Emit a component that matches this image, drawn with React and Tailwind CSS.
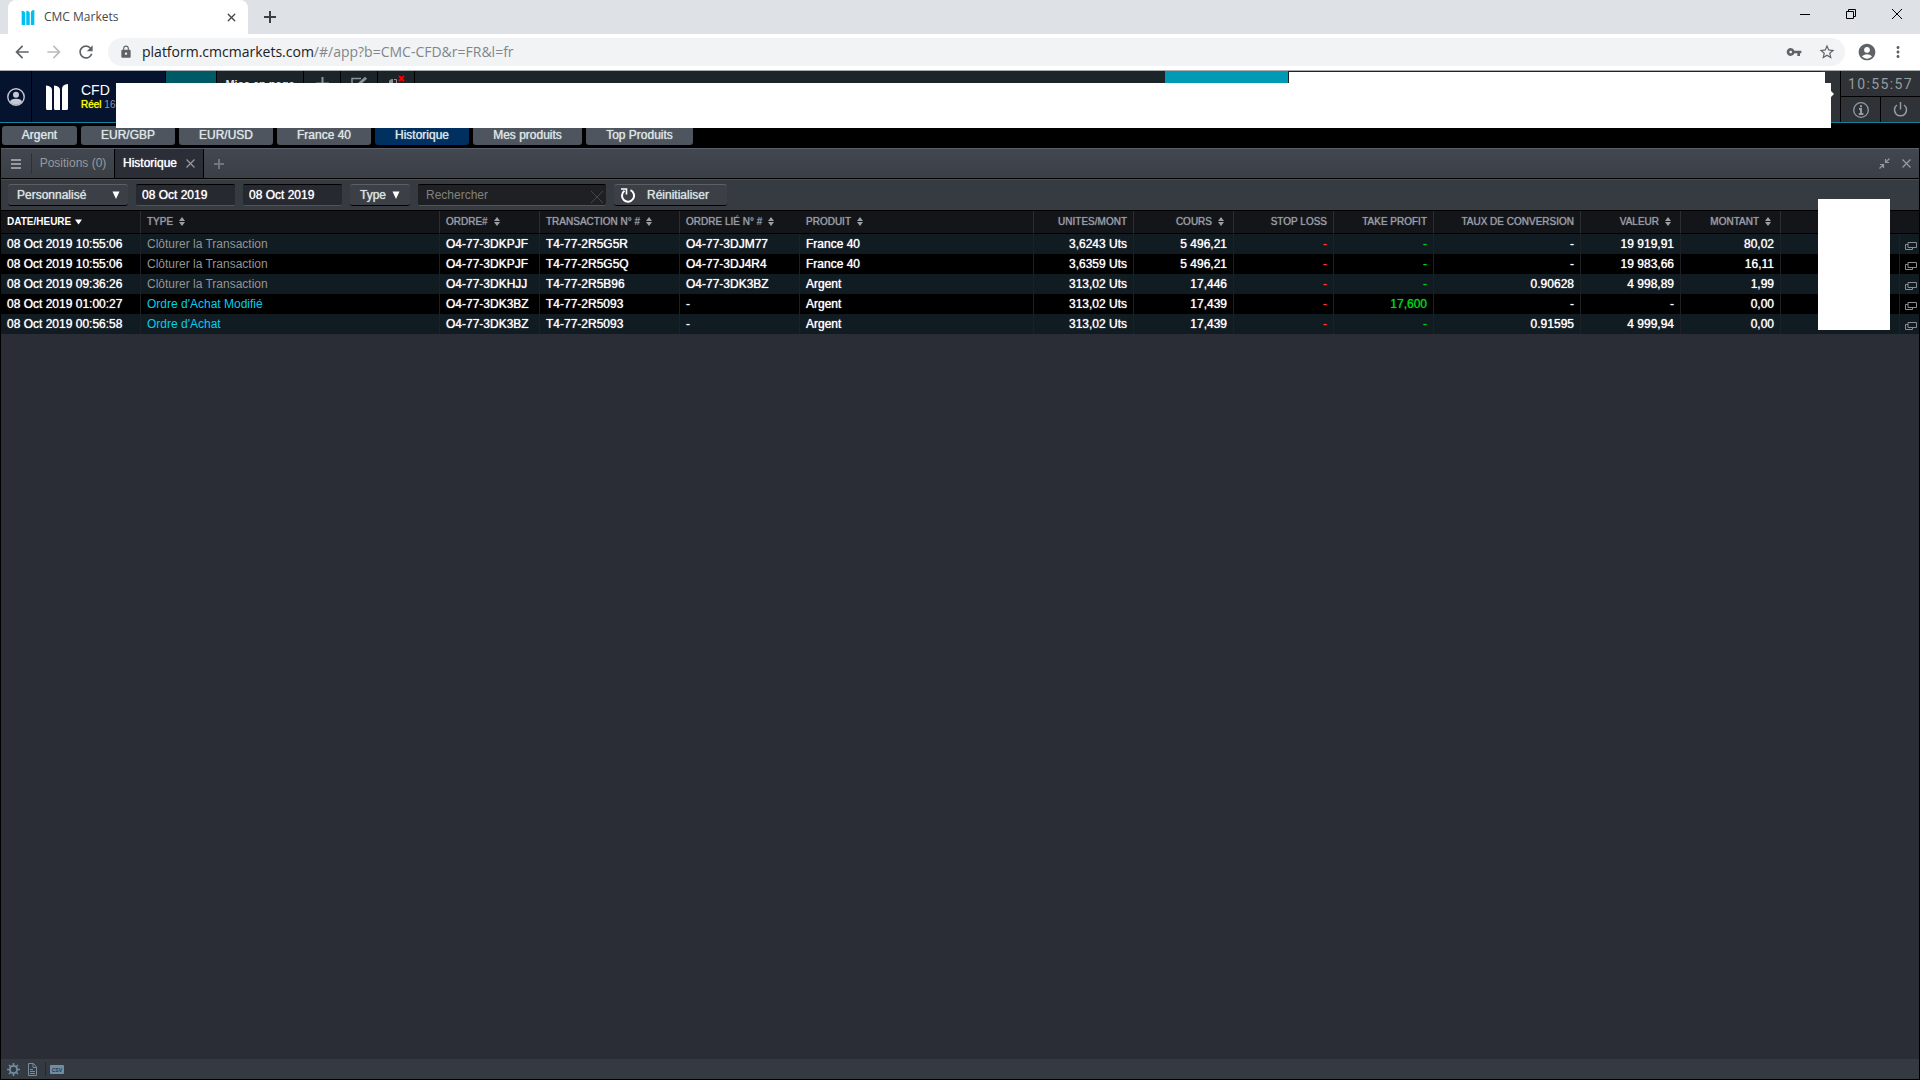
import { X } from 'lucide-react';
import {
  MdAccountCircle,
  MdArrowBack,
  MdArrowForward,
  MdLock,
  MdMoreVert,
  MdRefresh,
  MdStarBorder,
  MdVpnKey,
} from 'react-icons/md';

const layouts = [
  { name: 'Argent', width: 'w-[75px]' },
  { name: 'EUR/GBP', width: 'w-[94px]' },
  { name: 'EUR/USD', width: 'w-[94px]' },
  { name: 'France 40', width: 'w-[94px]' },
  { name: 'Historique', width: 'w-[94px]', active: true },
  { name: 'Mes produits', width: 'w-[109px]' },
  { name: 'Top Produits', width: 'w-[107px]' },
];

const columns = [
  { label: 'DATE/HEURE', width: 'w-[140px]', sort: 'desc' },
  { label: 'TYPE', width: 'w-[299px]', sort: 'both' },
  { label: 'ORDRE#', width: 'w-[100px]', sort: 'both' },
  { label: 'TRANSACTION N° #', width: 'w-[140px]', sort: 'both' },
  { label: 'ORDRE LIÉ N° #', width: 'w-[120px]', sort: 'both', open: true },
  { label: 'PRODUIT', width: 'w-[234px]', sort: 'both' },
  { label: 'UNITES/MONT', width: 'w-[100px]', right: true },
  { label: 'COURS', width: 'w-[100px]', right: true, sort: 'both' },
  { label: 'STOP LOSS', width: 'w-[100px]', right: true },
  { label: 'TAKE PROFIT', width: 'w-[100px]', right: true },
  { label: 'TAUX DE CONVERSION', width: 'w-[147px]', right: true },
  { label: 'VALEUR', width: 'w-[100px]', right: true, sort: 'both' },
  { label: 'MONTANT', width: 'w-[100px]', right: true, sort: 'both' },
];

const rows = [
  ['08 Oct 2019 10:55:06', 'Clôturer la Transaction', 'O4-77-3DKPJF', 'T4-77-2R5G5R', 'O4-77-3DJM77', 'France 40', '3,6243 Uts', '5 496,21', '-', '-', '-', '19 919,91', '80,02'],
  ['08 Oct 2019 10:55:06', 'Clôturer la Transaction', 'O4-77-3DKPJF', 'T4-77-2R5G5Q', 'O4-77-3DJ4R4', 'France 40', '3,6359 Uts', '5 496,21', '-', '-', '-', '19 983,66', '16,11'],
  ['08 Oct 2019 09:36:26', 'Clôturer la Transaction', 'O4-77-3DKHJJ', 'T4-77-2R5B96', 'O4-77-3DK3BZ', 'Argent', '313,02 Uts', '17,446', '-', '-', '0.90628', '4 998,89', '1,99'],
  ['08 Oct 2019 01:00:27', "Ordre d'Achat Modifié", 'O4-77-3DK3BZ', 'T4-77-2R5093', '-', 'Argent', '313,02 Uts', '17,439', '-', '17,600', '-', '-', '0,00'],
  ['08 Oct 2019 00:56:58', "Ordre d'Achat", 'O4-77-3DK3BZ', 'T4-77-2R5093', '-', 'Argent', '313,02 Uts', '17,439', '-', '-', '0.91595', '4 999,94', '0,00'],
];

function cellColor(value, index) {
  if (index === 1) return value.startsWith('Ordre') ? 'text-[#00cfea]' : 'text-[#949494]';
  if (index === 8) return 'text-[#ff3636]';
  if (index === 9) return 'text-[#00d419]';
  return 'text-white';
}

function Logo({ className }) {
  return (
    <svg viewBox="0 0 22 26" className={className} fill="currentColor">
      <path d="M0 1.500Q6 2 6 6V26H1.500Q0 26 0 24.500Z M8 1.500Q14 2 14 6V26H9.500Q8 26 8 24.500Z M16 5Q16 0.500 22 0V24.500Q22 26 20.500 26H16Z" />
    </svg>
  );
}

function SortIcon({ sort }) {
  if (sort === 'desc') {
    return (
      <svg width="8" height="6" viewBox="0 0 8 6" className="ml-1 text-white">
        <path d="M0 0.500H7L3.500 5.500Z" fill="currentColor" />
      </svg>
    );
  }
  return (
    <svg width="6" height="9" viewBox="0 0 6 9" className="mr-[3px] ml-1.5 text-[#9ba0a6]">
      <path d="M3 0L6 4H0Z M3 9L6 5H0Z" fill="currentColor" />
    </svg>
  );
}

function BrowserBar() {
  return (
    <header className="bg-white font-['Open_Sans',sans-serif]">
      <div className="flex h-[34px] bg-[#dee1e6]">
        <div className="ml-2 flex w-60 items-center rounded-t-lg bg-white pr-2.5 pl-[13px] text-[#45494d]">
          <Logo className="h-[15px] w-[14px] text-[#00c0f3]" />
          <span className="ml-[9px] flex-1 text-xs">CMC Markets</span>
          <button aria-label="Fermer l'onglet">
            <X size={13} strokeWidth={2.6} />
          </button>
        </div>
        <button aria-label="Nouvel onglet" className="ml-[15px] text-[#3c4043]">
          <svg width="14" height="14" viewBox="0 0 14 14" stroke="currentColor" strokeWidth="2">
            <path d="M7 1V13M1 7H13" />
          </svg>
        </button>
        <div className="ml-auto flex items-start gap-9 pt-[9px] pr-[18px] text-black">
          <button aria-label="Réduire">
            <svg width="10" height="10" viewBox="0 0 10 10" stroke="currentColor">
              <path d="M0 5.5H10" />
            </svg>
          </button>
          <button aria-label="Restaurer">
            <svg width="10" height="10" viewBox="0 0 10 10" fill="none" stroke="currentColor">
              <path d="M0.5 2.5H7.5V9.5H0.5Z M2.5 2.5V0.5H9.5V7.5H7.5" />
            </svg>
          </button>
          <button aria-label="Fermer">
            <svg width="10" height="10" viewBox="0 0 10 10" stroke="currentColor">
              <path d="M0 0L10 10M10 0L0 10" />
            </svg>
          </button>
        </div>
      </div>
      <div className="flex h-[37px] items-center gap-3 border-b border-[#a9adb0] pr-[13px] pl-3 text-[#5f6368]">
        <button aria-label="Retour"><MdArrowBack size={20} /></button>
        <button aria-label="Avancer" className="text-[#babcbe]"><MdArrowForward size={20} /></button>
        <button aria-label="Actualiser"><MdRefresh size={20} /></button>
        <div className="flex h-7 flex-1 items-center rounded-full bg-[#f1f3f4] pr-[9px] pl-[11px]">
          <MdLock size={14} />
          <div className="ml-[9px] flex-1 text-sm text-[#80868b]">
            <span className="text-[#202124]">platform.cmcmarkets.com</span>/#/app?b=CMC-CFD&amp;r=FR&amp;l=fr
          </div>
          <MdVpnKey size={16} />
          <MdStarBorder size={18} className="ml-4" />
        </div>
        <MdAccountCircle size={20} />
        <MdMoreVert size={18} />
      </div>
    </header>
  );
}

function PlatformBar() {
  return (
    <div className="relative flex h-[52px] border-b border-[#1583a0] bg-[#1b2429]">
      <button aria-label="Compte" className="flex w-8 items-center justify-center border-r border-black bg-[#05132f] text-[#c5cad2]">
        <svg width="18" height="18" viewBox="0 0 18 18" fill="none">
          <circle cx="9" cy="9" r="8.2" stroke="currentColor" strokeWidth="1.4" />
          <circle cx="9" cy="6.8" r="3" fill="currentColor" />
          <path d="M3 14Q3.500 10.800 9 10.800T15 14Q9 19.500 3 14Z" fill="currentColor" />
        </svg>
      </button>
      <div className="flex w-[134px] items-center border-r border-black bg-[#05132f] pl-[14px]">
        <Logo className="h-[26px] w-[22px] text-white" />
        <div className="ml-[13px] whitespace-nowrap">
          <div className="text-sm leading-4 text-white">CFD</div>
          <div className="text-[10px] leading-[14px] text-[#8e96a3]"><span className="text-[#ffff00] [text-shadow:0_0_1px_#ffff00]">Réel</span> 16</div>
        </div>
      </div>
      <div className="w-[51px] border-r border-black bg-[#005a66]" />
      <div className="flex h-6 text-[#8d9296]">
        <div className="w-[87px] border-r border-black pt-[5px] text-center text-[11px] leading-4 font-bold text-[#dfe3e6]">Mise en page</div>
        <button aria-label="Ajouter" className="flex w-[37px] items-center justify-center border-r border-black">
          <svg width="13" height="13" viewBox="0 0 13 13" stroke="currentColor" strokeWidth="2"><path d="M6.500 0V13M0 6.500H13" /></svg>
        </button>
        <button aria-label="Modifier" className="flex w-[37px] justify-center border-r border-black pt-[5px]">
          <svg width="17" height="16" viewBox="0 0 17 16" fill="none" stroke="currentColor" strokeWidth="1.500">
            <path d="M10 2.500H1V15H13V8" /><path d="M6 10L7 7L14 0.800L16 2.800L9 9Z" fill="currentColor" stroke="none" />
          </svg>
        </button>
        <button aria-label="Son" className="flex w-[37px] justify-center border-r border-black pt-1">
          <svg width="17" height="16" viewBox="0 0 17 16">
            <path d="M5 4Q1 4 1 7V13H5Z" fill="currentColor" />
            <path d="M6 4.500H8.500V13H6" fill="none" stroke="currentColor" />
            <path d="M11 1L16 6M16 1L11 6" stroke="#ff0000" strokeWidth="1.800" />
          </svg>
        </button>
      </div>
      <div className="ml-auto flex">
        <div className="mr-[533px] w-[123px] bg-[#009ab5]" />
        <div className="w-5 border-r border-black bg-[#2f3237]" />
        <div className="flex w-[79px] flex-col bg-[#2f3237] text-[#949da0]">
          <div className="flex h-[26px] items-center justify-center border-b border-black font-['Roboto',sans-serif] text-sm tabular-nums tracking-widest">10:55:57</div>
          <div className="flex flex-1">
            <button aria-label="Informations" className="flex flex-1 items-center justify-center border-r border-black">
              <svg width="16" height="16" viewBox="0 0 16 16" fill="none" stroke="currentColor">
                <circle cx="8" cy="8" r="7.300" strokeWidth="1.300" />
                <path d="M8 3.200V5.200M6 7H8V12M5.800 12H10.400" strokeWidth="2" />
              </svg>
            </button>
            <button aria-label="Déconnexion" className="flex flex-1 items-center justify-center">
              <svg width="15" height="15" viewBox="0 0 15 15" fill="none" stroke="currentColor" strokeWidth="1.500">
                <path d="M4 3A6 6 0 1 0 11 3M7.500 0V7.500" />
              </svg>
            </button>
          </div>
        </div>
      </div>
      <div className="absolute top-px right-[95px] h-3 w-[536px] bg-white" />
      <div className="absolute top-3 right-[89px] left-[116px] z-10 h-[45px] bg-white" />
      <svg width="4" height="6" viewBox="0 0 4 6" className="absolute top-5 right-[86px] text-white">
        <path d="M0 0H1L4 3L1 6H0Z" fill="currentColor" />
      </svg>
    </div>
  );
}

function PanelTabs() {
  return (
    <div className="flex h-[31px] border-t border-b border-t-[#59606b] border-b-black bg-linear-to-b from-[#424750] to-[#3b4046] text-[#969a9f]">
      <button aria-label="Menu" className="my-1 flex w-[31px] items-center justify-center border-r border-[#2d3136]">
        <svg width="10" height="10" viewBox="0 0 10 10" stroke="currentColor" strokeWidth="2"><path d="M0 1H10M0 5H10M0 9H10" /></svg>
      </button>
      <button className="w-[82px] pb-0.5 text-center text-xs">Positions (0)</button>
      <div className="flex w-[90px] items-center justify-between border-x border-black bg-[#2b2e36] px-2">
        <button className="pb-0.5 text-xs text-white [text-shadow:0_0_1px_#ffffff]">Historique</button>
        <button aria-label="Fermer Historique">
          <svg width="9" height="9" viewBox="0 0 9 9" stroke="currentColor" strokeWidth="1.200"><path d="M0.500 0.500L8.500 8.500M8.500 0.500L0.500 8.500" /></svg>
        </button>
      </div>
      <button aria-label="Ajouter un onglet" className="ml-[10px] text-[#72767c]">
        <svg width="10" height="10" viewBox="0 0 10 10" stroke="currentColor" strokeWidth="2"><path d="M5 0V10M0 5H10" /></svg>
      </button>
      <div className="ml-auto flex items-center gap-3 pr-2">
        <button aria-label="Réduire le panneau">
          <svg width="11" height="11" viewBox="0 0 11 11" fill="none" stroke="currentColor" strokeWidth="1.200">
            <path d="M10.500 0.500L7 4M6.500 1V4.500H10M0.500 10.500L4 7M1 6.500H4.500V10" />
          </svg>
        </button>
        <button aria-label="Fermer le panneau">
          <svg width="9" height="9" viewBox="0 0 9 9" stroke="currentColor" strokeWidth="1.300"><path d="M0.500 0.500L8.500 8.500M8.500 0.500L0.500 8.500" /></svg>
        </button>
      </div>
    </div>
  );
}

function Filters() {
  const button = 'h-[22px] rounded-[3px] border-t border-b border-t-[#5b6066] border-b-black bg-[#3c4046] text-[#d9e2e2] [text-shadow:0_0_1px_#d9e2e2]';
  const field = 'h-[22px] w-[99px] rounded-[2px] border-t border-b border-t-black border-b-[#4c5560] bg-[#272930] px-1.5 text-white [text-shadow:0_0_1px_#ffffff]';
  return (
    <div className="flex h-8 items-center gap-2 border-t border-b border-t-[#4a4e54] border-b-black bg-[#363a41] pl-[7px] text-xs">
      <div className="relative">
        <select aria-label="Période" className={`${button} w-[120px] appearance-none px-[9px]`}>
          <option>Personnalisé</option>
        </select>
        <svg width="8" height="8" viewBox="0 0 8 8" className="pointer-events-none absolute top-[7px] right-2 text-white"><path d="M0.500 0.500H7.500L4 8Z" fill="currentColor" /></svg>
      </div>
      <input aria-label="Date de début" defaultValue="08 Oct 2019" className={field} />
      <input aria-label="Date de fin" defaultValue="08 Oct 2019" className={field} />
      <button className={`${button} flex w-[60px] items-center justify-center gap-1.5`}>
        Type
        <svg width="8" height="8" viewBox="0 0 8 8" className="text-white"><path d="M0.500 0.500H7.500L4 8Z" fill="currentColor" /></svg>
      </button>
      <div className="relative">
        <input aria-label="Rechercher" placeholder="Rechercher" className="h-[22px] w-[188px] rounded-[2px] border-t border-b border-t-black border-b-[#4c5560] bg-[#1e2024] px-2 placeholder:text-[#81827f]" />
        <svg width="14" height="14" viewBox="0 0 14 14" stroke="#474747" className="pointer-events-none absolute top-1.5 right-0.5"><path d="M1 1L13 13M13 1L1 13" /></svg>
      </div>
      <button className={`${button} flex w-[113px] items-center gap-3 pl-[7px]`}>
        <svg width="14" height="15" viewBox="0 0 14 15" fill="none" stroke="#ffffff" strokeWidth="2">
          <path d="M3.500 2.800A6 6 0 1 0 9.500 2.200" /><path d="M0 1H5.500V6.500" strokeWidth="1.600" />
        </svg>
        Réinitialiser
      </button>
    </div>
  );
}

function HistoryTable() {
  return (
    <table className="w-full table-fixed border-separate border-spacing-0 text-left text-xs whitespace-nowrap">
      <thead className="bg-[#131519]">
        <tr className="h-[23px] text-[10px] text-[#989da6]">
          {columns.map((col, i) => (
            <th
              key={col.label}
              className={`${col.width} border-b border-b-black px-1.5 py-0 ${i === 0 ? 'font-bold text-white' : 'font-normal [text-shadow:0_0_1px_#989da6]'} ${col.open ? '' : 'border-r border-r-[#2a2d31]'}`}
            >
              <div className={`flex items-center ${col.right ? 'justify-end' : ''}`}>
                {col.label}
                {col.sort && <SortIcon sort={col.sort} />}
              </div>
            </th>
          ))}
          <th className="border-b border-black py-0" />
          <th className="w-[19px] border-b border-black py-0" />
        </tr>
      </thead>
      <tbody>
        {rows.map((row, r) => (
          <tr key={r} className="h-5 odd:bg-[#111b22] even:bg-black">
            {row.map((value, i) => (
              <td
                key={i}
                className={`border-r border-[#1d2126] px-1.5 py-0 ${cellColor(value, i)} ${i === 1 ? '' : '[text-shadow:0_0_1px_currentColor]'} ${columns[i].right ? 'text-right' : ''}`}
              >
                {value}
              </td>
            ))}
            <td className="border-r border-[#1d2126] py-0" />
            <td className="py-0 pl-[5px] text-[#8b8e90]">
              <button aria-label="Détails" className="block pt-1">
                <svg width="12" height="8" viewBox="0 0 12 8" fill="none" stroke="currentColor">
                  <path d="M3 0.500H11.500V5.500H3Z M3 2.500H0.500V7.500H7.500V5.500" />
                </svg>
              </button>
            </td>
          </tr>
        ))}
      </tbody>
    </table>
  );
}

function Footer() {
  return (
    <footer className="flex h-5 items-center bg-[#353a41] pl-1.5 text-[#6f8ea5]">
      <button aria-label="Paramètres">
        <svg width="13" height="13" viewBox="0 0 13 13" fill="none" stroke="currentColor">
          <circle cx="6.500" cy="6.500" r="3.600" strokeWidth="1.800" />
          <path d="M6.500 0V3M6.500 10V13M0 6.500H3M10 6.500H13M2 2L4 4M9 9L11 11M11 2L9 4M4 9L2 11" strokeWidth="1.600" />
        </svg>
      </button>
      <button aria-label="Rapport" className="ml-2">
        <svg width="9" height="13" viewBox="0 0 9 13" fill="none" stroke="currentColor">
          <path d="M0.500 0.500H5.500L8.500 4V12.500H0.500Z M5 0.500V4.500H8.500 M2 6.500H5M2 8.500H7M2 10.500H7" />
        </svg>
      </button>
      <div className="ml-2 h-[14px] w-px bg-[#25292e]" />
      <button aria-label="Exporter" className="ml-1 h-[9px] w-[14px] rounded-[1px] bg-[#6f8ea5] text-center text-[7px] leading-[9px] text-[#1d2b36]">csv</button>
    </footer>
  );
}

function App() {
  return (
    <div className="flex min-h-screen flex-col bg-black font-['Liberation_Sans',Arial,sans-serif]">
      <BrowserBar />
      <PlatformBar />
      <nav className="flex h-[25px] gap-1 pt-[3px] pb-[3px] pl-0.5 text-xs">
        {layouts.map((layout) => (
          <button
            key={layout.name}
            className={`${layout.width} rounded-[3px] pb-0.5 text-[#dce5e5] [text-shadow:0_0_1px_#dce5e5] ${layout.active ? 'bg-[#00305f]' : 'bg-[#4e555e]'}`}
          >
            {layout.name}
          </button>
        ))}
      </nav>
      <main className="relative mb-px ml-px mr-px flex flex-1 flex-col bg-[#2a2d35]">
        <PanelTabs />
        <Filters />
        <HistoryTable />
        <div className="flex-1" />
        <Footer />
        <div className="absolute top-[51px] right-[29px] h-[131px] w-[72px] bg-white" />
      </main>
    </div>
  );
}

export default App;
